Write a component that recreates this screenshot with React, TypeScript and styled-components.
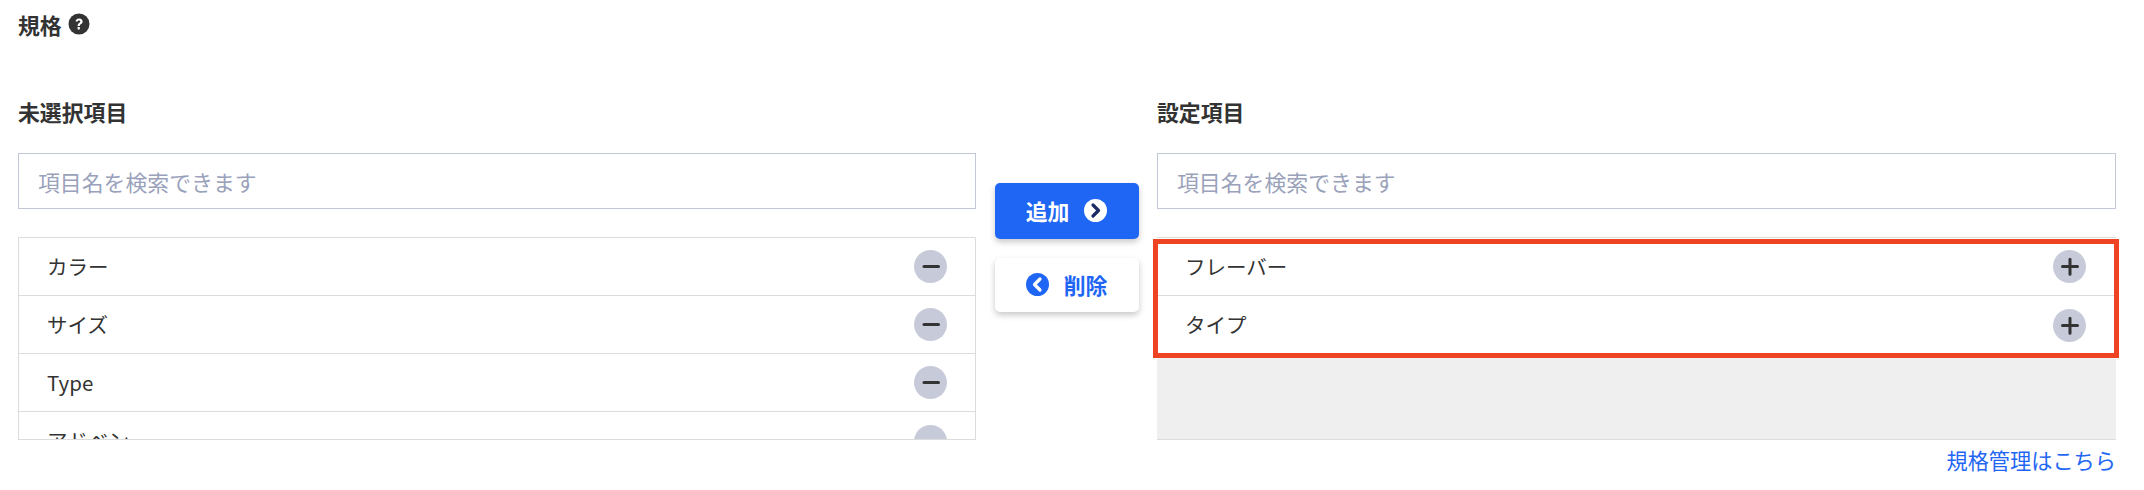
import React from "react";
import styled, { createGlobalStyle } from "styled-components";

const Global = createGlobalStyle`
  html, body { margin: 0; padding: 0; background: #fff; }
  body { font-family: "Noto Sans CJK JP", "Noto Sans", sans-serif; color: #333; }
`;

const Page = styled.div`
  position: relative;
  width: 2144px;
  height: 490px;
  box-sizing: border-box;
  padding: 8px 28px 0 18px;
  overflow: hidden;
`;

const PageTitle = styled.h2`
  display: flex;
  align-items: center;
  gap: 6px;
  margin: 0 0 56px;
  height: 32px;
  font-size: 21.87px;
  font-weight: 700;
  color: #333;
`;

const Columns = styled.div`
  display: grid;
  grid-template-columns: 958px 144px 959px;
  column-gap: 18.5px;
`;

const Column = styled.section`
  display: flex;
  flex-direction: column;
`;

const ColumnTitle = styled.h3`
  margin: 0 0 25px;
  height: 32px;
  line-height: 32px;
  font-size: 21.87px;
  font-weight: 700;
  color: #333;
`;

const SearchInput = styled.input`
  box-sizing: border-box;
  width: 100%;
  height: 56px;
  margin: 0 0 28px;
  padding: 0 19px;
  border: 1px solid #c3c8d9;
  border-radius: 0;
  outline: none;
  font-family: inherit;
  font-size: 21.87px;
  &::placeholder { color: #9aa2bb; opacity: 1; }
`;

const ListFrame = styled.div<{ $filled?: boolean }>`
  box-sizing: border-box;
  height: 203px;
  overflow: hidden;
  border-top: 1px solid #dcdcdc;
  border-bottom: 1px solid #dcdcdc;
  border-left: ${(p) => (p.$filled ? "none" : "1px solid #dcdcdc")};
  border-right: ${(p) => (p.$filled ? "none" : "1px solid #dcdcdc")};
  background: ${(p) => (p.$filled ? "#efefef" : "#fff")};
`;

const Row = styled.div<{ $filled?: boolean }>`
  box-sizing: border-box;
  display: flex;
  align-items: center;
  justify-content: space-between;
  height: 58px;
  padding: 0 ${(p) => (p.$filled ? "30px" : "28px")} 0 28px;
  background: #fff;
  border-bottom: 1px solid #dcdcdc;
  &:last-child { border-bottom: none; }
`;

const RowLabel = styled.span`
  padding-bottom: 2px;
  font-size: 20.5px;
  color: #333;
`;

const RoundIcon = styled.span`
  display: block;
  flex: none;
  width: 33px;
  height: 33px;
  border-radius: 50%;
  background: #c7cbd9;
  & svg { display: block; }
`;

const Highlight = styled.div`
  position: absolute;
  left: 1153px;
  top: 239px;
  width: 966px;
  height: 119px;
  box-sizing: border-box;
  border: 5px solid #ee4423;
  pointer-events: none;
`;

const Middle = styled.div`
  display: flex;
  flex-direction: column;
  gap: 19px;
  padding-top: 87px;
`;

const MoveButton = styled.button<{ $primary?: boolean }>`
  display: flex;
  align-items: center;
  justify-content: center;
  gap: 15px;
  width: 144px;
  height: ${(p) => (p.$primary ? "56px" : "54px")};
  padding: 0 0 2px;
  border: none;
  border-radius: 5px;
  font-family: inherit;
  font-size: 21.87px;
  font-weight: 700;
  color: ${(p) => (p.$primary ? "#fff" : "#1f66f4")};
  background: ${(p) => (p.$primary ? "#1f66f4" : "#fff")};
  box-shadow: 0 3px 6px rgba(0, 0, 0, 0.22);
`;

const Footer = styled.div`
  display: flex;
  justify-content: flex-end;
  padding-top: 5px;
`;

const FooterLink = styled.a`
  font-size: 21.2px;
  line-height: 30px;
  color: #1f66f4;
  text-decoration: none;
`;

const HelpIcon = () => (
  <svg width="22" height="22" viewBox="0 0 22 22">
    <circle cx="11" cy="11" r="10.5" fill="#333" />
    <path d="M7.6 8.6C7.8 6.7 9.2 5.6 11.1 5.6c2 0 3.5 1.2 3.5 2.9 0 1.4-.8 2.1-1.8 2.8-.7.5-1 .8-1 1.7H9.6c0-1.6.6-2.3 1.6-3 .7-.5 1.1-.9 1.1-1.5 0-.7-.5-1.1-1.3-1.1-.8 0-1.3.5-1.4 1.2z" fill="#fff" />
    <rect x="9.6" y="14" width="2.3" height="2.5" rx=".4" fill="#fff" />
  </svg>
);

const Minus = () => (
  <RoundIcon>
    <svg width="33" height="33" viewBox="0 0 33 33">
      <path d="M10 16.5h14.5" stroke="#333" strokeWidth="3" strokeLinecap="round" />
    </svg>
  </RoundIcon>
);

const Plus = () => (
  <RoundIcon>
    <svg width="33" height="33" viewBox="0 0 33 33">
      <path d="M9.5 16.5h15M17 9.2v15" stroke="#333" strokeWidth="3" strokeLinecap="round" />
    </svg>
  </RoundIcon>
);

const Chevron = ({ dir, bg, fg }: { dir: "left" | "right"; bg: string; fg: string }) => (
  <svg width="23" height="23" viewBox="0 0 23 23">
    <circle cx="11.5" cy="11.5" r="11.5" fill={bg} />
    <path
      d={dir === "right" ? "M9 6l5.5 5.5L9 17" : "M14 6l-5.5 5.5L14 17"}
      fill="none"
      stroke={fg}
      strokeWidth="3.2"
      strokeLinecap="round"
      strokeLinejoin="round"
    />
  </svg>
);

export default function App() {
  return (
    <Page>
      <Global />
      <PageTitle>
        規格 <HelpIcon />
      </PageTitle>
      <Columns>
        <Column>
          <ColumnTitle>未選択項目</ColumnTitle>
          <SearchInput placeholder="項目名を検索できます" />
          <ListFrame>
            {["カラー", "サイズ", "Type", "アドベン"].map((t) => (
              <Row key={t}>
                <RowLabel>{t}</RowLabel>
                <Minus />
              </Row>
            ))}
          </ListFrame>
        </Column>
        <Middle>
          <MoveButton $primary>
            追加
            <Chevron dir="right" bg="#fff" fg="#1c2b66" />
          </MoveButton>
          <MoveButton>
            <Chevron dir="left" bg="#1f66f4" fg="#fff" />
            削除
          </MoveButton>
        </Middle>
        <Column>
          <ColumnTitle>設定項目</ColumnTitle>
          <SearchInput placeholder="項目名を検索できます" />
          <ListFrame $filled>
            {["フレーバー", "タイプ"].map((t) => (
              <Row key={t} $filled>
                <RowLabel>{t}</RowLabel>
                <Plus />
              </Row>
            ))}
          </ListFrame>
          <Footer>
            <FooterLink href="#">規格管理はこちら</FooterLink>
          </Footer>
        </Column>
      </Columns>
      <Highlight />
    </Page>
  );
}
